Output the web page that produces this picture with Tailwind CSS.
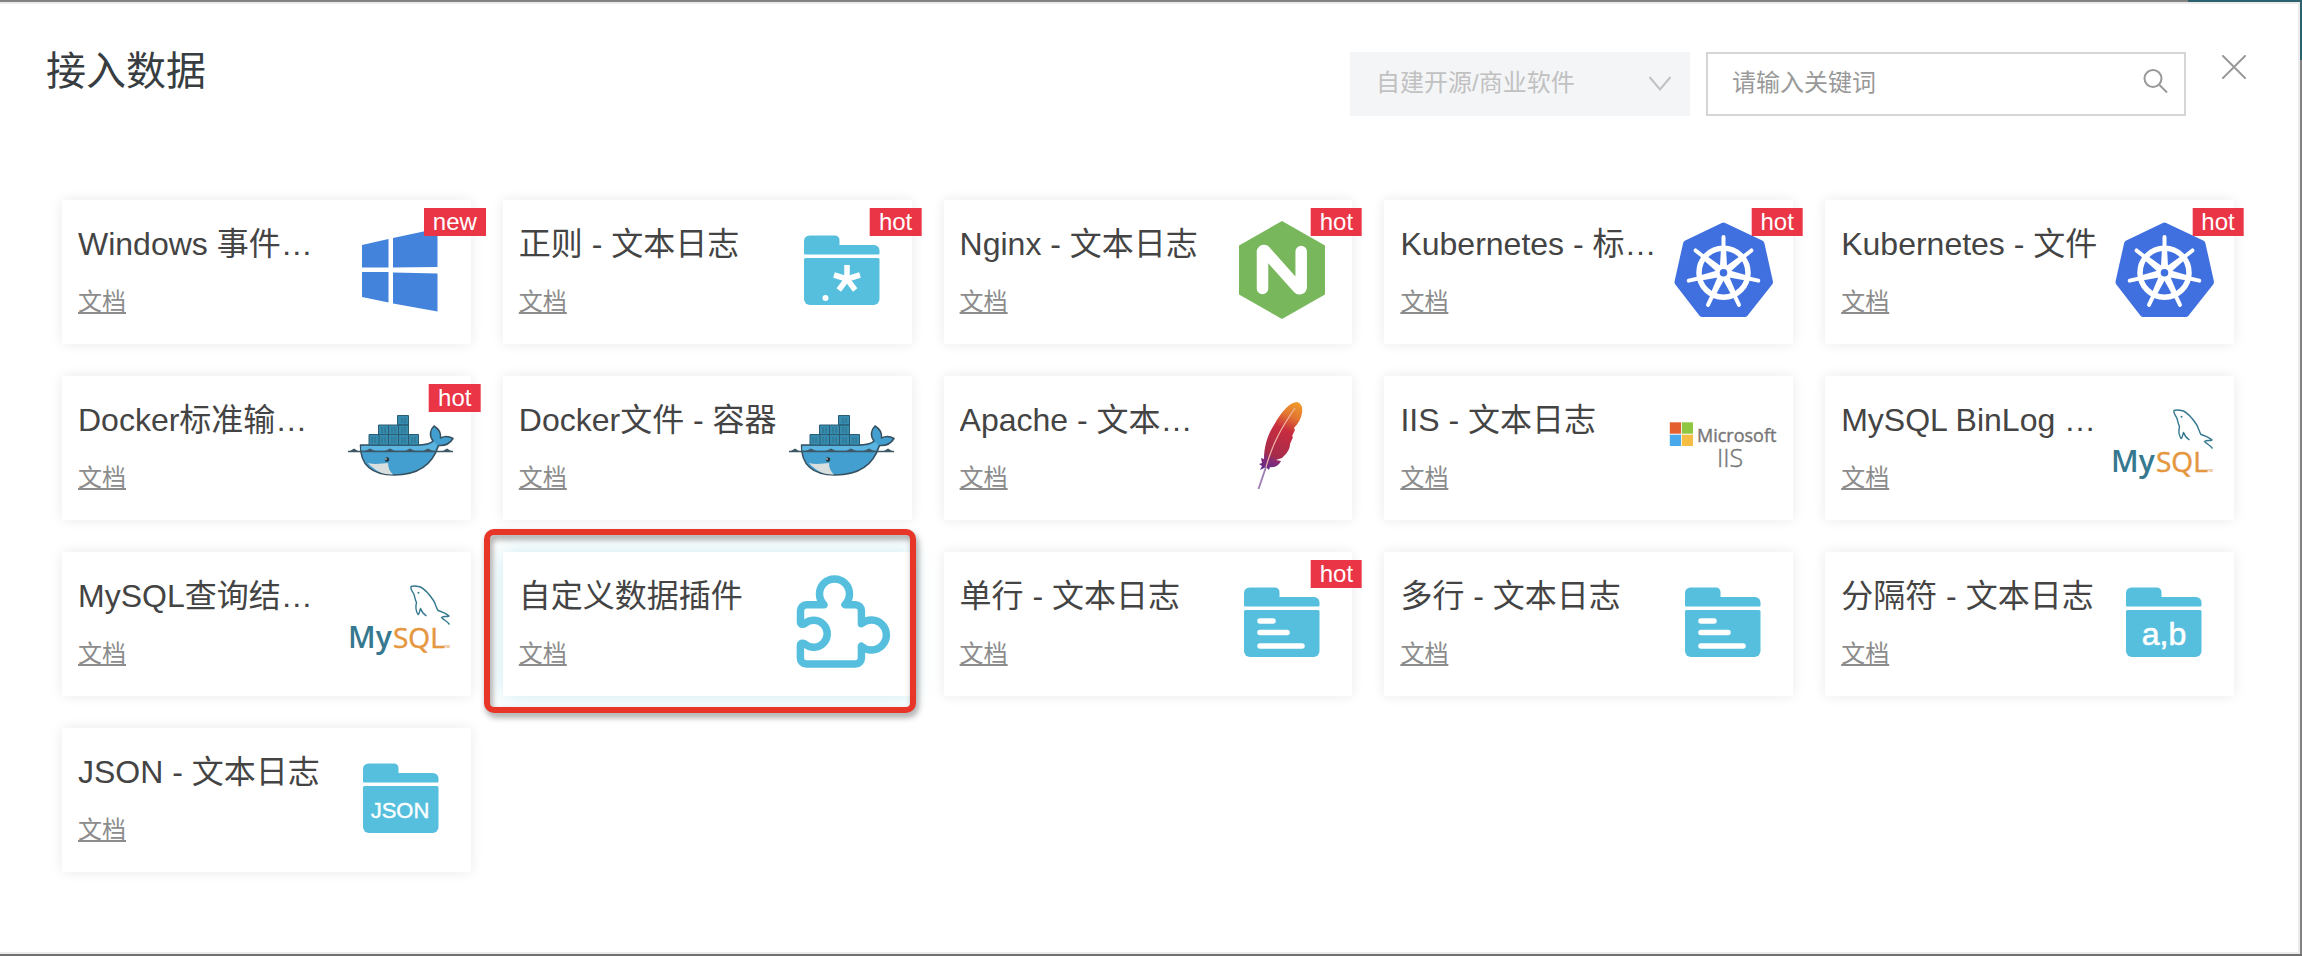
<!DOCTYPE html>
<html lang="zh-CN">
<head>
<meta charset="utf-8">
<title>接入数据</title>
<script src="https://cdn.jsdelivr.net/npm/@tailwindcss/browser@4"></script>
</head>
<body class="bg-white font-['Liberation_Sans','Noto_Sans_CJK_SC',sans-serif] text-[#444]">

<!-- Gradients have to stay rendered to be usable, so they live apart from the hidden icons -->
<svg class="absolute size-0" aria-hidden="true">
  <defs>
    <linearGradient id="feather" x1="68" y1="10" x2="38" y2="78" gradientUnits="userSpaceOnUse"><stop offset="0" stop-color="#f09a2c"/><stop offset=".2" stop-color="#e27631"/><stop offset=".4" stop-color="#c82c3f"/><stop offset=".78" stop-color="#a62c4b"/><stop offset=".86" stop-color="#842b78"/><stop offset="1" stop-color="#622b8a"/></linearGradient>
  </defs>
</svg>

<!-- Shared icons -->
<svg class="hidden" aria-hidden="true">
  <symbol id="i-windows" viewBox="0 0 108 108">
    <g fill="#4383db"><path d="M15 29l26.500-6v28.500H15z"/><path d="M46 22l44.500-9.500V51L46 51.500z"/><path d="M15 56h26.500v30.500L15 81z"/><path d="M46 56.500l44.500 1V95.500L46 87.500z"/></g>
  </symbol>
  <symbol id="i-folder" viewBox="0 0 108 108">
    <g fill="#56bfdd"><path d="M16 38.500V25a5.500 5.500 0 0 1 5.500-5.500H47a4.500 4.500 0 0 1 4.500 4.500v5H86a5.500 5.500 0 0 1 5.500 5.500v3a1 1 0 0 1-1 1h-73.500a1 1 0 0 1-1-1z"/><path d="M17.500 42h72.500a1.500 1.500 0 0 1 1.500 1.500V83a6 6 0 0 1-6 6h-63.500a6 6 0 0 1-6-6V43.500a1.500 1.500 0 0 1 1.500-1.500z"/></g>
  </symbol>
  <symbol id="i-lines" viewBox="0 0 108 108">
    <use href="#i-folder"/>
    <path d="M32 53h13M32 64.500h27M32 78h42" stroke="#fff" stroke-width="5.500" stroke-linecap="round"/>
  </symbol>
  <symbol id="i-regex" viewBox="0 0 108 108">
    <use href="#i-folder"/>
    <path d="M59 63V49M59 63l-13-4M59 63l13-4M59 63l-8.200 11M59 63l8.200 11" stroke="#fff" stroke-width="5.500"/>
    <circle cx="37.500" cy="82" r="3" fill="#fff"/>
  </symbol>
  <symbol id="i-nginx" viewBox="0 0 108 108">
    <path d="M54 5l43 24.500v49L54 103 11 78.500v-49z" fill="#79b75d"/>
    <path d="M34.500 72.500V36.500a1.500 1.500 0 0 1 3-1L70 72a1.800 1.800 0 0 0 3.200-.8V35.500" fill="none" stroke="#fff" stroke-width="11.500" stroke-linecap="round" stroke-linejoin="round"/>
  </symbol>
  <symbol id="i-kube" viewBox="0 0 108 108">
    <path d="M54.500 10.500L91.500 28l8.500 38-24.500 31h-42L9.500 66 18 28z" fill="#4070df" stroke="#4070df" stroke-width="8" stroke-linejoin="round"/>
    <g stroke="#fff" fill="none">
      <circle cx="54.500" cy="56.700" r="24.500" stroke-width="5.500"/>
      <g id="spoke"><path d="M54.500 32V21" stroke-width="4" stroke-linecap="round"/><path d="M52 32h5l1 18h-7z" fill="#fff" stroke="none"/></g>
      <use href="#spoke" transform="rotate(51.430 54.500 56.700)"/><use href="#spoke" transform="rotate(102.860 54.500 56.700)"/><use href="#spoke" transform="rotate(154.290 54.500 56.700)"/><use href="#spoke" transform="rotate(205.710 54.500 56.700)"/><use href="#spoke" transform="rotate(257.140 54.500 56.700)"/><use href="#spoke" transform="rotate(308.570 54.500 56.700)"/>
    </g>
    <circle cx="54.500" cy="56.700" r="8" fill="#fff"/><circle cx="54.500" cy="56.700" r="3.800" fill="#4070df"/>
  </symbol>
  <symbol id="i-docker" viewBox="0 0 108 108">
    <path d="M13.500 53H70c8 0 13-1 16-4-4-5-3-11 1-15 5 3 7 7 6.500 12 4-2 9-1.500 12.500 0.500-3 5-8 7.500-14.500 7C86 71 73 83 47 83 25 83 13 73 13.500 53z" fill="#439fcf" stroke="#36505f" stroke-width="1.500" stroke-linejoin="round"/>
    <path d="M14.500 54H72c7 0 12-1 15-4l3 3-2 5H14z" fill="#5bb5e0"/>
    <path d="M21 71c8 2 15 0 20 0 0 5 2 9 5 11.500C35 83 27 78 21 71z" fill="#d9dedf"/>
    <g fill="#368cae" stroke="#2b5c73" stroke-width="1"><path d="M50.500 23.500h11v9.500h-11zM31.500 33h30v9.500h-30zM22 42.500h49.500V53H22z"/><path d="M41.500 33v20M51.500 33v20M61.500 42.500V53M32 42.500V53" fill="none"/><path d="M35 35v6M38 35v6M45 35v6M48 35v6M55 26v5M58 26v5M55 35v6M58 35v6M25 45v6M28 45v6M35 45v6M38 45v6M45 45v6M48 45v6M55 45v6M58 45v6M65 45v6M68 45v6" stroke-width=".6"/></g>
    <path d="M1 59.500h105" stroke="#3d5864" stroke-width="1.600"/>
    <path d="M3 59l4-2.500 4 2.500zM18 59l5-2.500 5 2.500zM38 59l5-2.500 5 2.500zM58 59l5-2.500 5 2.500zM76 59l5-2.500 5 2.500zM96 59l4-2.500 4 2.500z" fill="#3d5864"/>
    <circle cx="40" cy="67.500" r="2.200" fill="#24343c"/><circle cx="39" cy="67" r=".8" fill="#fff"/>
  </symbol>
  <symbol id="i-apache" viewBox="0 0 108 108">
    <path d="M69 10c4 1 6 5 5 11-1 6-4 11-8 15l1 2-3 6 1 1-3 7c0 6-4 10-8 14l-6 2 5 1c-2 4-6 7-11 6l-1 3-3-3-6 3 2-4-3-2 3-1-1-5 3 1C36 54 40 42 46 33c7-13 16-23 23-23z" fill="url(#feather)"/>
    <path d="M67 16C54 35 45 50 38 75" fill="none" stroke="#f0b7a6" stroke-width="1.200"/>
    <path d="M38 75l-7.500 22" stroke="#9b7cb0" stroke-width="1.800"/>
  </symbol>
  <symbol id="i-iis" viewBox="0 0 108 108">
    <path d="M.8 30.300H12v11.400H.8z" fill="#e4602f"/><path d="M12.800 30.300H24v11.400H12.800z" fill="#8fc742"/><path d="M.8 42.700H12V54H.8z" fill="#4aa9ea"/><path d="M12.800 42.700H24V54H12.800z" fill="#f5bd42"/>
    <g fill="#777" class="font-['Open_Sans',sans-serif]">
      <text x="28" y="50" font-size="18" font-weight="500" stroke="#777" stroke-width=".4">Microsoft</text>
      <text x="48" y="75" font-size="25" font-weight="300" stroke="#777" stroke-width=".4">IIS</text>
    </g>
  </symbol>
  <symbol id="i-mysql" viewBox="0 0 108 108">
    <g font-weight="600" class="font-['Open_Sans',sans-serif]">
      <text x="1" y="79.500" font-size="30" fill="#35788f">My</text>
      <text x="46" y="79.500" font-size="28" fill="#e5973f" font-weight="500" stroke="#e5973f" stroke-width=".5">SQL</text>
      <text x="97" y="79.500" font-size="4" fill="#e5973f">TM</text>
    </g>
    <path d="M102.500 56.500c-2-3-5-4-8-7 2-1.500 5-.5 7.500-1.500-3-3-7-4-11-5.500-2-3-2.500-7-4.500-10-4-6-8-11-13-13.500-4-1-7-1.500-9.500-.5-1 3 2 5 3 8s1 5 2.500 8c-1 4-1 8 1.500 12 2-1 1.500-4 2.500-6 1 3 3 5.500 6 7.500" fill="none" stroke="#35788f" stroke-width="1.400" stroke-linejoin="round"/>
    <circle cx="71.500" cy="24.700" r="1" fill="#35788f"/>
  </symbol>
  <symbol id="i-puzzle" viewBox="0 0 108 108">
    <path d="M12.500 43a6 6 0 0 1 6-6.300H36A15 15 0 1 1 57 36.700h10.400a6 6 0 0 1 6 6V55.800a15 15 0 1 1 0 22.400V90a6 6 0 0 1-6 6h-49a6 6 0 0 1-6-6V78c0-3 2-3.500 4.500-2A13.500 13.500 0 1 0 17 55.500c-2.500 1.500-4.500 1-4.500-2z" fill="none" stroke="#56bfdd" stroke-width="7.500" stroke-linejoin="round"/>
  </symbol>
  <symbol id="i-comma" viewBox="0 0 108 108">
    <use href="#i-folder"/>
    <text x="54" y="77" font-size="32" text-anchor="middle" fill="#fff" stroke="#fff" stroke-width=".6">a,b</text>
  </symbol>
  <symbol id="i-json" viewBox="0 0 108 108">
    <use href="#i-folder"/>
    <text x="53" y="74" font-size="22" text-anchor="middle" fill="#fff" stroke="#fff" stroke-width=".4">JSON</text>
  </symbol>
</svg>

<div class="flex min-h-screen flex-col">
  <div class="flex h-0.5 bg-[#828282]"><div class="ml-auto w-[114px] bg-[#2d616e]"></div></div>
  <div class="flex flex-1">
    <main class="flex-1 border-y-2 border-r-2 border-[#ebebeb] bg-white pb-16">
      <header class="flex items-start pt-12 pr-[52px] pl-[46px]">
        <h1 class="text-[40px] leading-[38px] text-[#373d41]">接入数据</h1>
        <div class="relative ml-auto w-[340px]">
          <select aria-label="数据来源" disabled class="block h-16 w-full appearance-none bg-[#f4f5f7] pr-14 pb-0.5 pl-[26px] text-2xl text-[#c1c1c1] opacity-100"><option>自建开源/商业软件</option></select>
          <svg class="pointer-events-none absolute top-5 right-[18px] size-6" viewBox="0 0 24 24" fill="none" stroke="#c1c1c1" stroke-width="2"><path d="M1.500 5L12 17.500 22.500 5"/></svg>
        </div>
        <div class="relative ml-4 w-[480px]">
          <input type="text" aria-label="关键词" placeholder="请输入关键词" class="block h-16 w-full border-2 border-[#d6d6d6] bg-white pr-14 pb-0.5 pl-6 text-2xl outline-none placeholder:text-[#999]">
          <svg class="pointer-events-none absolute top-4 right-4 size-7" viewBox="0 0 28 28" fill="none" stroke="#999" stroke-width="2"><circle cx="11" cy="10.500" r="8.500"/><path d="M17.500 17l7.500 7.500"/></svg>
        </div>
        <button type="button" aria-label="关闭" class="mt-[3px] ml-9 size-6"><svg class="size-6" viewBox="0 0 24 24" stroke="#999" stroke-width="2" stroke-linecap="round"><path d="M1 1l22 22M23 1L1 23"/></svg></button>
      </header>

      <ul class="mt-[84px] grid grid-cols-5 gap-8 pr-16 pl-[62px]">
        <li class="relative flex h-36 justify-between bg-white p-4 shadow-[0_0_12px_rgba(0,0,0,0.09)]">
          <div><h2 class="mt-2 w-[260px] overflow-hidden text-[32px] leading-10 whitespace-nowrap">Windows 事件…</h2><a href="#" class="mt-5 inline-block text-2xl leading-9 text-[#8c8c8c] underline">文档</a></div>
          <svg class="size-[108px] shrink-0"><use href="#i-windows"/></svg>
          <span class="absolute top-2 right-4 h-7 translate-x-1/2 bg-[#e93545] px-[9px] text-2xl leading-7 text-white">new</span>
        </li>
        <li class="relative flex h-36 justify-between bg-white p-4 shadow-[0_0_12px_rgba(0,0,0,0.09)]">
          <div><h2 class="mt-2 w-[260px] overflow-hidden text-[32px] leading-10 whitespace-nowrap">正则 - 文本日志</h2><a href="#" class="mt-5 inline-block text-2xl leading-9 text-[#8c8c8c] underline">文档</a></div>
          <svg class="size-[108px] shrink-0"><use href="#i-regex"/></svg>
          <span class="absolute top-2 right-4 h-7 translate-x-1/2 bg-[#e93545] px-[9px] text-2xl leading-7 text-white">hot</span>
        </li>
        <li class="relative flex h-36 justify-between bg-white p-4 shadow-[0_0_12px_rgba(0,0,0,0.09)]">
          <div><h2 class="mt-2 w-[260px] overflow-hidden text-[32px] leading-10 whitespace-nowrap">Nginx - 文本日志</h2><a href="#" class="mt-5 inline-block text-2xl leading-9 text-[#8c8c8c] underline">文档</a></div>
          <svg class="size-[108px] shrink-0"><use href="#i-nginx"/></svg>
          <span class="absolute top-2 right-4 h-7 translate-x-1/2 bg-[#e93545] px-[9px] text-2xl leading-7 text-white">hot</span>
        </li>
        <li class="relative flex h-36 justify-between bg-white p-4 shadow-[0_0_12px_rgba(0,0,0,0.09)]">
          <div><h2 class="mt-2 w-[260px] overflow-hidden text-[32px] leading-10 whitespace-nowrap">Kubernetes - 标…</h2><a href="#" class="mt-5 inline-block text-2xl leading-9 text-[#8c8c8c] underline">文档</a></div>
          <svg class="size-[108px] shrink-0"><use href="#i-kube"/></svg>
          <span class="absolute top-2 right-4 h-7 translate-x-1/2 bg-[#e93545] px-[9px] text-2xl leading-7 text-white">hot</span>
        </li>
        <li class="relative flex h-36 justify-between bg-white p-4 shadow-[0_0_12px_rgba(0,0,0,0.09)]">
          <div><h2 class="mt-2 w-[260px] overflow-hidden text-[32px] leading-10 whitespace-nowrap">Kubernetes - 文件</h2><a href="#" class="mt-5 inline-block text-2xl leading-9 text-[#8c8c8c] underline">文档</a></div>
          <svg class="size-[108px] shrink-0"><use href="#i-kube"/></svg>
          <span class="absolute top-2 right-4 h-7 translate-x-1/2 bg-[#e93545] px-[9px] text-2xl leading-7 text-white">hot</span>
        </li>

        <li class="relative flex h-36 justify-between bg-white p-4 shadow-[0_0_12px_rgba(0,0,0,0.09)]">
          <div><h2 class="mt-2 w-[260px] overflow-hidden text-[32px] leading-10 whitespace-nowrap">Docker标准输…</h2><a href="#" class="mt-5 inline-block text-2xl leading-9 text-[#8c8c8c] underline">文档</a></div>
          <svg class="size-[108px] shrink-0"><use href="#i-docker"/></svg>
          <span class="absolute top-2 right-4 h-7 translate-x-1/2 bg-[#e93545] px-[9px] text-2xl leading-7 text-white">hot</span>
        </li>
        <li class="relative flex h-36 justify-between bg-white p-4 shadow-[0_0_12px_rgba(0,0,0,0.09)]">
          <div><h2 class="mt-2 w-[260px] overflow-hidden text-[32px] leading-10 whitespace-nowrap">Docker文件 - 容器</h2><a href="#" class="mt-5 inline-block text-2xl leading-9 text-[#8c8c8c] underline">文档</a></div>
          <svg class="size-[108px] shrink-0"><use href="#i-docker"/></svg>
        </li>
        <li class="relative flex h-36 justify-between bg-white p-4 shadow-[0_0_12px_rgba(0,0,0,0.09)]">
          <div><h2 class="mt-2 w-[260px] overflow-hidden text-[32px] leading-10 whitespace-nowrap">Apache - 文本…</h2><a href="#" class="mt-5 inline-block text-2xl leading-9 text-[#8c8c8c] underline">文档</a></div>
          <svg class="size-[108px] shrink-0"><use href="#i-apache"/></svg>
        </li>
        <li class="relative flex h-36 justify-between bg-white p-4 shadow-[0_0_12px_rgba(0,0,0,0.09)]">
          <div><h2 class="mt-2 w-[260px] overflow-hidden text-[32px] leading-10 whitespace-nowrap">IIS - 文本日志</h2><a href="#" class="mt-5 inline-block text-2xl leading-9 text-[#8c8c8c] underline">文档</a></div>
          <svg class="size-[108px] shrink-0"><use href="#i-iis"/></svg>
        </li>
        <li class="relative flex h-36 justify-between bg-white p-4 shadow-[0_0_12px_rgba(0,0,0,0.09)]">
          <div><h2 class="mt-2 w-[260px] overflow-hidden text-[32px] leading-10 whitespace-nowrap">MySQL BinLog …</h2><a href="#" class="mt-5 inline-block text-2xl leading-9 text-[#8c8c8c] underline">文档</a></div>
          <svg class="size-[108px] shrink-0"><use href="#i-mysql"/></svg>
        </li>

        <li class="relative flex h-36 justify-between bg-white p-4 shadow-[0_0_12px_rgba(0,0,0,0.09)]">
          <div><h2 class="mt-2 w-[260px] overflow-hidden text-[32px] leading-10 whitespace-nowrap">MySQL查询结…</h2><a href="#" class="mt-5 inline-block text-2xl leading-9 text-[#8c8c8c] underline">文档</a></div>
          <svg class="size-[108px] shrink-0"><use href="#i-mysql"/></svg>
        </li>
        <li class="relative flex h-36 justify-between bg-white p-4 shadow-[0_0_20px_rgba(0,160,190,0.22)]">
          <div><h2 class="mt-2 w-[260px] overflow-hidden text-[32px] leading-10 whitespace-nowrap">自定义数据插件</h2><a href="#" class="mt-5 inline-block text-2xl leading-9 text-[#8c8c8c] underline">文档</a></div>
          <svg class="size-[108px] shrink-0"><use href="#i-puzzle"/></svg>
          <!-- Annotation frame around the chosen card -->
          <div class="pointer-events-none absolute -top-[23px] -right-1 -bottom-[17px] -left-[19px] rounded-[10px] border-6 border-[#e73527] drop-shadow-[2px_4px_3px_rgba(0,0,0,0.4)]"></div>
        </li>
        <li class="relative flex h-36 justify-between bg-white p-4 shadow-[0_0_12px_rgba(0,0,0,0.09)]">
          <div><h2 class="mt-2 w-[260px] overflow-hidden text-[32px] leading-10 whitespace-nowrap">单行 - 文本日志</h2><a href="#" class="mt-5 inline-block text-2xl leading-9 text-[#8c8c8c] underline">文档</a></div>
          <svg class="size-[108px] shrink-0"><use href="#i-lines"/></svg>
          <span class="absolute top-2 right-4 h-7 translate-x-1/2 bg-[#e93545] px-[9px] text-2xl leading-7 text-white">hot</span>
        </li>
        <li class="relative flex h-36 justify-between bg-white p-4 shadow-[0_0_12px_rgba(0,0,0,0.09)]">
          <div><h2 class="mt-2 w-[260px] overflow-hidden text-[32px] leading-10 whitespace-nowrap">多行 - 文本日志</h2><a href="#" class="mt-5 inline-block text-2xl leading-9 text-[#8c8c8c] underline">文档</a></div>
          <svg class="size-[108px] shrink-0"><use href="#i-lines"/></svg>
        </li>
        <li class="relative flex h-36 justify-between bg-white p-4 shadow-[0_0_12px_rgba(0,0,0,0.09)]">
          <div><h2 class="mt-2 w-[260px] overflow-hidden text-[32px] leading-10 whitespace-nowrap">分隔符 - 文本日志</h2><a href="#" class="mt-5 inline-block text-2xl leading-9 text-[#8c8c8c] underline">文档</a></div>
          <svg class="size-[108px] shrink-0"><use href="#i-comma"/></svg>
        </li>

        <li class="relative flex h-36 justify-between bg-white p-4 shadow-[0_0_12px_rgba(0,0,0,0.09)]">
          <div><h2 class="mt-2 w-[260px] overflow-hidden text-[32px] leading-10 whitespace-nowrap">JSON - 文本日志</h2><a href="#" class="mt-5 inline-block text-2xl leading-9 text-[#8c8c8c] underline">文档</a></div>
          <svg class="size-[108px] shrink-0"><use href="#i-json"/></svg>
        </li>
      </ul>
    </main>
    <div class="w-0.5 bg-[#828282]"><div class="h-[58px] bg-[#2d616e]"></div></div>
  </div>
  <div class="h-0.5 bg-[#707070]"></div>
</div>
</body>
</html>
